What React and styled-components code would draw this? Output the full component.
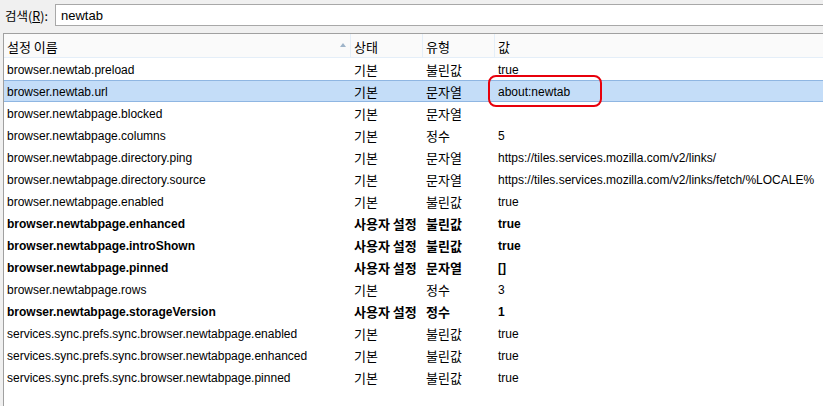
import React from "react";
import styled, { createGlobalStyle } from "styled-components";

const Global = createGlobalStyle`
  html, body { margin: 0; padding: 0; background: #f0f0f0; }
  body { font-family: "Liberation Sans", "Noto Sans CJK KR", sans-serif; font-size: 12px; color: #000; overflow: hidden; }
`;

const Page = styled.div`
  width: 823px;
  height: 406px;
  display: flex;
  flex-direction: column;
  background: #f0f0f0;
`;

const SearchBar = styled.div`
  display: flex;
  align-items: center;
  height: 33px;
  padding: 0 0 0 5px;
  box-sizing: border-box;
`;

const Label = styled.label`
  width: 50px;
  font-size: 12px;
  margin-top: -3px;
  font-family: "Noto Sans CJK KR", sans-serif;
  font-size: 12.5px;
  u { text-decoration: underline; }
`;

const Input = styled.div`
  flex: 1;
  height: 22px;
  margin-top: -3px;
  margin-right: -5px;
  border: 1px solid #a8a8a8;
  border-right: none;
  background: #fff;
  box-sizing: border-box;
  display: flex;
  align-items: center;
  padding-left: 5px;
  font-size: 13px;
`;

const ListWrap = styled.div`
  position: relative;
  flex: 1;
  margin-left: 3px;
  border-top: 1px solid #a0a0a0;
  border-left: 1px solid #a0a0a0;
  background: #fff;
`;

const Grid = styled.div`
  display: grid;
  grid-template-columns: 347px 72px 72px 1fr;
`;

const HeadCell = styled.div`
  position: relative;
  height: 23px;
  background: #fafafa;
  border-bottom: 1px solid #e4eef8;
  border-right: ${(p) => (p.$last ? "none" : "1px solid #e4eef8")};
  display: flex;
  align-items: center;
  padding: 1px 0 0 3px;
  box-sizing: border-box;
  height: 24px;
  font-size: 13px;
  font-family: "Noto Sans CJK KR", sans-serif;
`;

const SortArrow = styled.span`
  position: absolute;
  right: 4px;
  top: 9px;
  width: 0;
  height: 0;
  border-left: 3.5px solid transparent;
  border-right: 3.5px solid transparent;
  border-bottom: 4px solid #9fb4c9;
`;

const Row = styled.div`
  display: contents;
`;

const Cell = styled.div`
  height: 22px;
  box-sizing: border-box;
  display: flex;
  align-items: center;
  padding: ${(p) => (p.$ko ? "1px" : "2px")} 0 0 3px;
  white-space: nowrap;
  overflow: hidden;
  font-weight: ${(p) => (p.$bold ? 700 : 400)};
  background: ${(p) => (p.$sel ? "#c4ddf8" : "transparent")};
  border-top: 1px solid ${(p) => (p.$sel ? "#8fb6e2" : "transparent")};
  border-bottom: 1px solid ${(p) => (p.$sel ? "#8fb6e2" : "transparent")};
  font-size: ${(p) => (p.$ko ? "13px" : "12px")};
  font-family: ${(p) => (p.$ko ? '"Noto Sans CJK KR", sans-serif' : '"Liberation Sans", "Noto Sans CJK KR", sans-serif')};
`;

const Highlight = styled.div`
  position: absolute;
  left: 484px;
  top: 41px;
  width: 114px;
  height: 32px;
  box-sizing: border-box;
  border: 2.5px solid #e8000b;
  border-radius: 8px;
  pointer-events: none;
`;

const rows = [
  ["browser.newtab.preload", "기본", "불린값", "true"],
  ["browser.newtab.url", "기본", "문자열", "about:newtab", false, true],
  ["browser.newtabpage.blocked", "기본", "문자열", ""],
  ["browser.newtabpage.columns", "기본", "정수", "5"],
  ["browser.newtabpage.directory.ping", "기본", "문자열", "https://tiles.services.mozilla.com/v2/links/"],
  ["browser.newtabpage.directory.source", "기본", "문자열", "https://tiles.services.mozilla.com/v2/links/fetch/%LOCALE%"],
  ["browser.newtabpage.enabled", "기본", "불린값", "true"],
  ["browser.newtabpage.enhanced", "사용자 설정", "불린값", "true", true],
  ["browser.newtabpage.introShown", "사용자 설정", "불린값", "true", true],
  ["browser.newtabpage.pinned", "사용자 설정", "문자열", "[]", true],
  ["browser.newtabpage.rows", "기본", "정수", "3"],
  ["browser.newtabpage.storageVersion", "사용자 설정", "정수", "1", true],
  ["services.sync.prefs.sync.browser.newtabpage.enabled", "기본", "불린값", "true"],
  ["services.sync.prefs.sync.browser.newtabpage.enhanced", "기본", "불린값", "true"],
  ["services.sync.prefs.sync.browser.newtabpage.pinned", "기본", "불린값", "true"],
];

export default function App() {
  return (
    <Page>
      <Global />
      <SearchBar>
        <Label>검색(<u>R</u>):</Label>
        <Input>newtab</Input>
      </SearchBar>
      <ListWrap>
        <Grid>
          <HeadCell $first>
            설정 이름
            <SortArrow />
          </HeadCell>
          <HeadCell>상태</HeadCell>
          <HeadCell>유형</HeadCell>
          <HeadCell $last>값</HeadCell>
          {rows.map(([name, status, type, value, bold, sel]) => (
            <Row key={name}>
              <Cell $bold={bold} $sel={sel}>{name}</Cell>
              <Cell $bold={bold} $sel={sel} $ko>{status}</Cell>
              <Cell $bold={bold} $sel={sel} $ko>{type}</Cell>
              <Cell $bold={bold} $sel={sel}>{value}</Cell>
            </Row>
          ))}
        </Grid>
        <Highlight />
      </ListWrap>
    </Page>
  );
}
